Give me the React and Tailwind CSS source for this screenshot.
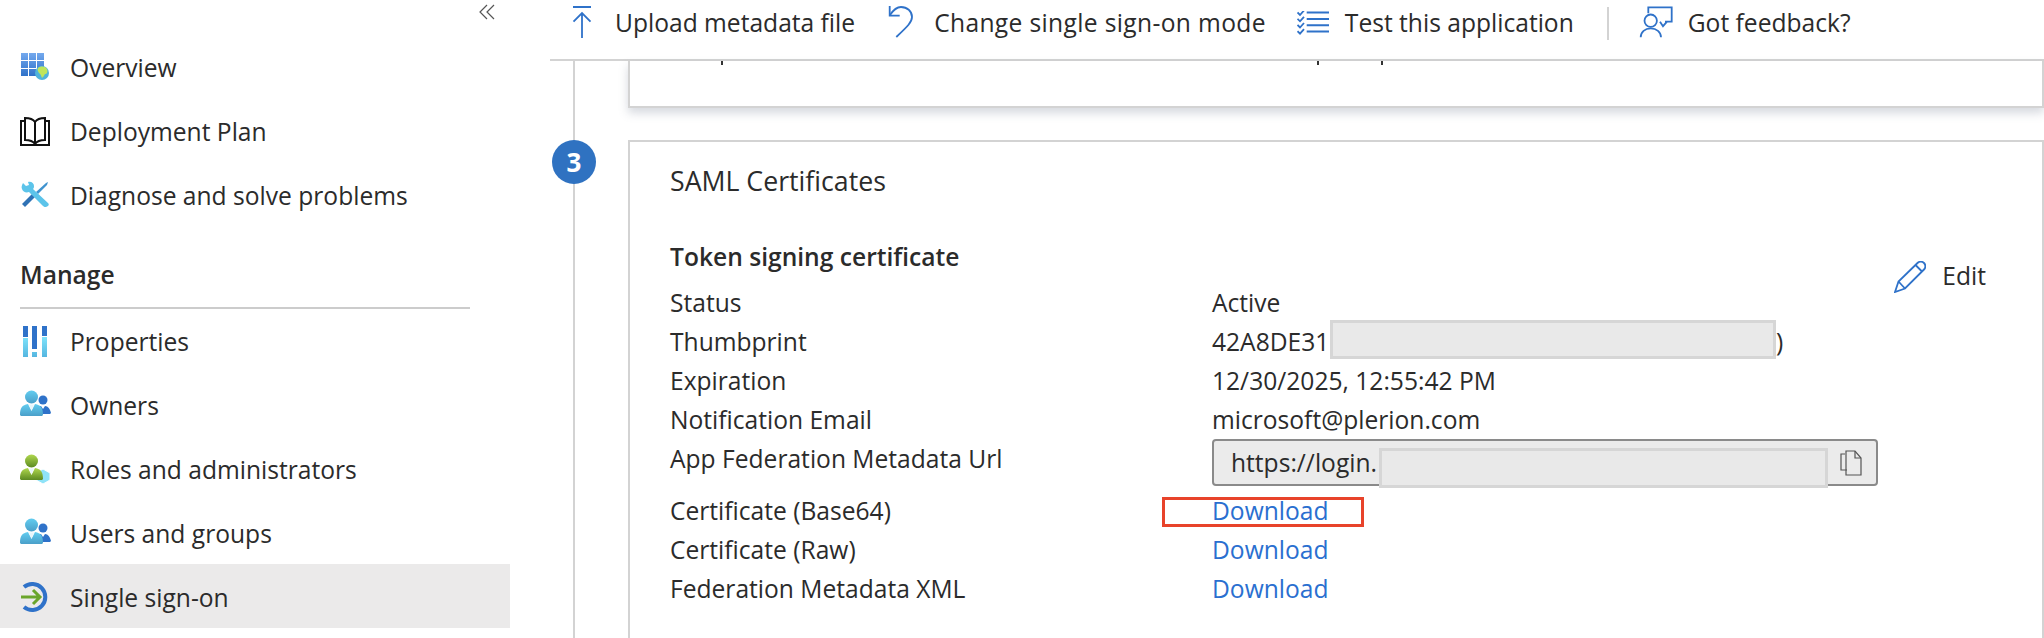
import React from "react";

const BLUE = "#2f72c9";

const OverviewIcon = () => (
  <svg width="32" height="32" viewBox="0 0 32 32">
    <defs>
      <linearGradient id="ov" x1="0" y1="0" x2="0" y2="1">
        <stop offset="0" stopColor="#74a9ee" />
        <stop offset="1" stopColor="#2f72c9" />
      </linearGradient>
    </defs>
    <path fill="url(#ov)" d="M1 1h7v7H1zM9 1h7v7H9zM17 1h7v7h-7zM1 9h7v7H1zM9 9h7v7H9zM17 9h7v7h-7zM1 17h7v7H1zM9 17h7v7H9zM17 17h4v7h-4z" />
    <circle cx="22" cy="21" r="7" fill="#4fb3dc" />
    <path fill="#bfe55c" d="M18 16c3-2 7-2 9 1 1 3 0 5-2 5-1 2-2 3-3 4-1-2-1-4-3-5-1-2-2-3-1-5z" />
  </svg>
);

const BookIcon = () => (
  <svg width="32" height="32" viewBox="0 0 32 32" fill="none" stroke="#111" strokeWidth="2">
    <path d="M5 5H1v24h28V5h-4" />
    <path d="M15 28c-2-3-6-4-10-4V2c4 0 8 1 10 4 2-3 6-4 10-4v22c-4 0-8 1-10 4z" fill="#fff" />
    <path d="M15 6v22" />
  </svg>
);

const ToolsIcon = () => (
  <svg width="32" height="32" viewBox="0 0 32 32">
    <path fill="#2f72b5" d="M2 24l11-11 3 3L5 27z" />
    <path fill="#3f93cf" d="M16 12L26 3l2-1-1 3-9 9z" />
    <path fill="#5cc4ea" d="M3 3l3 3 3-1-1-3c3-1 6 1 6 4 0 1 0 2-1 3l15 14c1 1 1 2 0 3l-2 1c-1 0-2 0-3-1L9 12c-3 1-6 0-7-3-1-2 0-4 1-6z" />
  </svg>
);

const PropertiesIcon = () => (
  <svg width="32" height="32" viewBox="0 0 32 32">
    <defs>
      <linearGradient id="pr" x1="0" y1="0" x2="0" y2="1">
        <stop offset="0" stopColor="#7fe3fb" />
        <stop offset="1" stopColor="#55b6e0" />
      </linearGradient>
    </defs>
    <path fill={BLUE} d="M3 0h5v11H3zM12 0h5v23h-5zM22 0h5v10h-5z" />
    <path fill="url(#pr)" d="M3 12h5v19H3zM12 26h5v5h-5zM22 11h5v20h-5z" />
  </svg>
);

// big person with a small one or a cube next to it
const Person = ({ top, bottom, id, children }) => (
  <svg width="32" height="32" viewBox="0 0 32 32">
    <defs>
      <linearGradient id={id} x1="0" y1="0" x2="0" y2="1">
        <stop offset="0" stopColor={top} />
        <stop offset="1" stopColor={bottom} />
      </linearGradient>
    </defs>
    {children}
    <circle cx="11.5" cy="7" r="6.5" fill={`url(#${id})`} />
    <path fill={`url(#${id})`} d="M0 25c0-7 2-10 8-11l3.500 7 3.500-7c6 1 8 4 8 11l-1 1H1z" />
    <path fill="#e8f6fb" d="M9 14.500h5l-2.500 6z" />
  </svg>
);

const SmallPerson = () => (
  <g fill={BLUE}>
    <circle cx="23" cy="10" r="4.500" />
    <path d="M16 24c0-5 2-8 5-8l2 3 2-3c3 0 5 3 6 7l-1 1H16z" />
  </g>
);

const SsoIcon = () => (
  <svg width="32" height="32" viewBox="0 0 32 32" fill="none">
    <path stroke={BLUE} strokeWidth="4" d="M4 5a13 13 0 1 1 0 20" />
    <path stroke="#6aa52b" strokeWidth="3" d="M1 15h19M13 8l7 7-7 7" />
  </svg>
);

const UploadIcon = () => (
  <svg width="20" height="34" viewBox="0 0 20 34" fill="none" stroke={BLUE} strokeWidth="1.800">
    <path d="M1 1h18M10 32V7M1.500 15.700L10 7l8.500 8.700" />
  </svg>
);

const ModeIcon = () => (
  <svg width="26" height="34" viewBox="0 0 26 34" fill="none" stroke={BLUE} strokeWidth="1.800">
    <path d="M2 9C6 3 10 1 13 1c6 0 11 4 11 10 0 5-4 9-15.700 20" />
    <path d="M1.700 0v9.700h10" />
  </svg>
);

const TestIcon = () => (
  <svg width="32" height="24" viewBox="0 0 32 24" fill="none" stroke={BLUE}>
    <path strokeWidth="2" d="M9.700 1.600H32M9.700 8H32M9.700 14.200H32M9.700 20.400H32" />
    <path strokeWidth="1.800" d="M.5 1.500l2.500 2.500 4-4.500M.5 7.800l2.500 2.500 4-4.500M.5 14l2.500 2.500 4-4.500M.5 20.200l2.500 2.500 4-4.500" />
  </svg>
);

const FeedbackIcon = () => (
  <svg width="34" height="34" viewBox="0 0 34 34" fill="none" stroke={BLUE} strokeWidth="1.800">
    <path d="M9.300 7.300V1.300H32.700V15.700H26M21 15.700l3 4.500 4-4.500" />
    <circle cx="11.700" cy="14.700" r="6.200" />
    <path d="M1.700 31.300C1.700 26 6 22.300 11.700 22.300S22 26 22 31.300" />
  </svg>
);

const EditIcon = () => (
  <svg width="32" height="32" viewBox="0 0 32 32" fill="none" stroke={BLUE} strokeWidth="1.800">
    <path d="M1 31l3.500-10.500L23.500 2A4.500 4.500 0 0 1 30 8.500L11 27.500z" />
    <path d="M4.500 20.500l6.500 7M21.500 4l6.500 6.500" />
  </svg>
);

const CopyIcon = () => (
  <svg width="22" height="26" viewBox="0 0 22 26" fill="none" stroke="#555" strokeWidth="1.200">
    <path d="M5 4H1v16h6" />
    <path d="M6 1h9l6 7v17H6z" />
    <path d="M15 1v7h6" />
  </svg>
);

const NavRow = ({ icon, label, className = "" }) => (
  <div className={`h-[64px] flex items-center pl-5 gap-[18px] ${className}`}>
    <div className="w-[32px] h-[32px] shrink-0">{icon}</div>
    <span>{label}</span>
  </div>
);

const Tool = ({ icon, label, gap, labelClass = "" }) => (
  <div className={`flex items-center ${gap}`}>
    {icon}
    <span className={labelClass}>{label}</span>
  </div>
);

const Row = ({ label, children }) => (
  <div className="flex h-[39px] leading-[39px]">
    <div className="w-[542px] shrink-0">{label}</div>
    <div className="flex-1 relative">{children}</div>
  </div>
);

const Redact = ({ className }) => (
  <div className={`absolute bg-[#e9e9e9] border-[3px] border-[#d6d6d6] ${className}`} />
);

const Download = () => <a className="text-[#2a6fd0]">Download</a>;

export default function App() {
  return (
    <div className="w-[2044px] h-[638px] overflow-hidden flex bg-white text-[#2b2b2b] text-[24.600px] font-['Open_Sans',sans-serif]">
      <aside className="w-[550px] shrink-0 pr-[40px]">
        <div className="h-[36px] flex justify-end pr-[15px] pt-[4px]">
          <svg width="16" height="16" viewBox="0 0 16 16" fill="none" stroke="#555" strokeWidth="1.200">
            <path d="M8 1L1 8l7 7M15 1L8 8l7 7" />
          </svg>
        </div>
        <NavRow icon={<OverviewIcon />} label="Overview" />
        <NavRow icon={<BookIcon />} label="Deployment Plan" />
        <NavRow icon={<ToolsIcon />} label="Diagnose and solve problems" />
        <div className="h-[81px] ml-5 w-[450px] border-b-2 border-[#cccccc] pt-[29px] font-semibold leading-[36px]">Manage</div>
        <NavRow icon={<PropertiesIcon />} label="Properties" className="pt-[2px]" />
        <NavRow
          icon={
            <Person id="own" top="#62cdf0" bottom="#4a9fc9">
              <SmallPerson />
            </Person>
          }
          label="Owners"
          className="pt-[2px]"
        />
        <NavRow
          icon={
            <Person id="rol" top="#b0d84e" bottom="#5c8a22">
              <path fill="#8fe3f8" stroke="#fff" d="M23 15l7 4v7l-7 4-7-4v-7z" />
            </Person>
          }
          label="Roles and administrators"
          className="pt-[2px]"
        />
        <NavRow
          icon={
            <Person id="usr" top="#62cdf0" bottom="#4a9fc9">
              <SmallPerson />
            </Person>
          }
          label="Users and groups"
          className="pt-[2px]"
        />
        <NavRow icon={<SsoIcon />} label="Single sign-on" className="-mt-[1px] pt-[4px] bg-[#ebeaea]" />
      </aside>

      <main className="flex-1 min-w-0 flex flex-col">
        <div className="h-[61px] shrink-0 border-b-2 border-[#d3d3d3] flex items-center pb-[13px] pl-[22px]">
          <Tool icon={<UploadIcon />} label="Upload metadata file" gap="gap-[23px]" />
          <div className="w-[33px]" />
          <Tool icon={<ModeIcon />} label="Change single sign-on mode" gap="gap-[20px]" labelClass="tracking-[0.35px]" />
          <div className="w-[31px]" />
          <Tool icon={<TestIcon />} label="Test this application" gap="gap-[16px]" />
          <div className="w-[33px]" />
          <div className="w-[2px] h-[33px] bg-[#d3d3d3]" />
          <div className="w-[30px]" />
          <Tool icon={<FeedbackIcon />} label="Got feedback?" gap="gap-[15px]" />
        </div>

        <div className="flex flex-1 min-h-0">
          <div className="w-[78px] shrink-0 relative">
            <div className="ml-[23px] w-[2px] h-full bg-[#d3d3d3]" />
            <div className="absolute left-[2px] top-[79px] w-[44px] h-[44px] rounded-full bg-[#2f72c1] text-white font-bold text-[26px] flex items-center justify-center">3</div>
          </div>

          <div className="flex-1 min-w-0">
            <div className="h-[47px] border-x-2 border-b-2 border-[#d3d3d3] shadow-[0_5px_9px_rgba(120,130,150,0.3)] bg-white flex items-start pl-[91px]">
              <div className="w-[2px] h-[4px] bg-[#333]" />
              <div className="w-[2px] h-[4px] bg-[#333] ml-[594px]" />
              <div className="w-[2px] h-[4px] bg-[#333] ml-[62px]" />
            </div>

            <div className="mt-[32px] h-[600px] border-2 border-[#d3d3d3] pl-[40px] pr-[56px] pt-[19px]">
              <div className="leading-[39px] text-[26.700px]">SAML Certificates</div>
              <div className="mt-[37px] flex justify-between h-[46px]">
                <div className="font-semibold leading-[39px]">Token signing certificate</div>
                <div className="flex items-center gap-[16px] self-end -mb-[12px]">
                  <EditIcon />
                  <span>Edit</span>
                </div>
              </div>
              <Row label="Status">Active</Row>
              <Row label="Thumbprint">
                <span>42A8DE31</span>
                <span className="absolute left-[564px]">)</span>
                <Redact className="left-[118px] top-[-2px] w-[446px] h-[39px]" />
              </Row>
              <Row label="Expiration">12/30/2025, 12:55:42 PM</Row>
              <Row label="Notification Email">microsoft@plerion.com</Row>
              <div className="flex h-[52px] leading-[39px]">
                <div className="w-[542px] shrink-0">App Federation Metadata Url</div>
                <div className="relative w-[666px] h-[47px] rounded-[4px] border-2 border-[#8a8a8a] bg-[#ebebeb] flex items-center justify-between pl-[17px] pr-[14px]">
                  <span>https://login.</span>
                  <CopyIcon />
                  <Redact className="left-[165px] top-[7px] w-[449px] h-[40px]" />
                </div>
              </div>
              <Row label="Certificate (Base64)">
                <Download />
                <div className="absolute left-[-50px] top-[6px] w-[202px] h-[30px] border-[3px] border-[#e8432a]" />
              </Row>
              <Row label="Certificate (Raw)">
                <Download />
              </Row>
              <Row label="Federation Metadata XML">
                <Download />
              </Row>
            </div>
          </div>
        </div>
      </main>
    </div>
  );
}
